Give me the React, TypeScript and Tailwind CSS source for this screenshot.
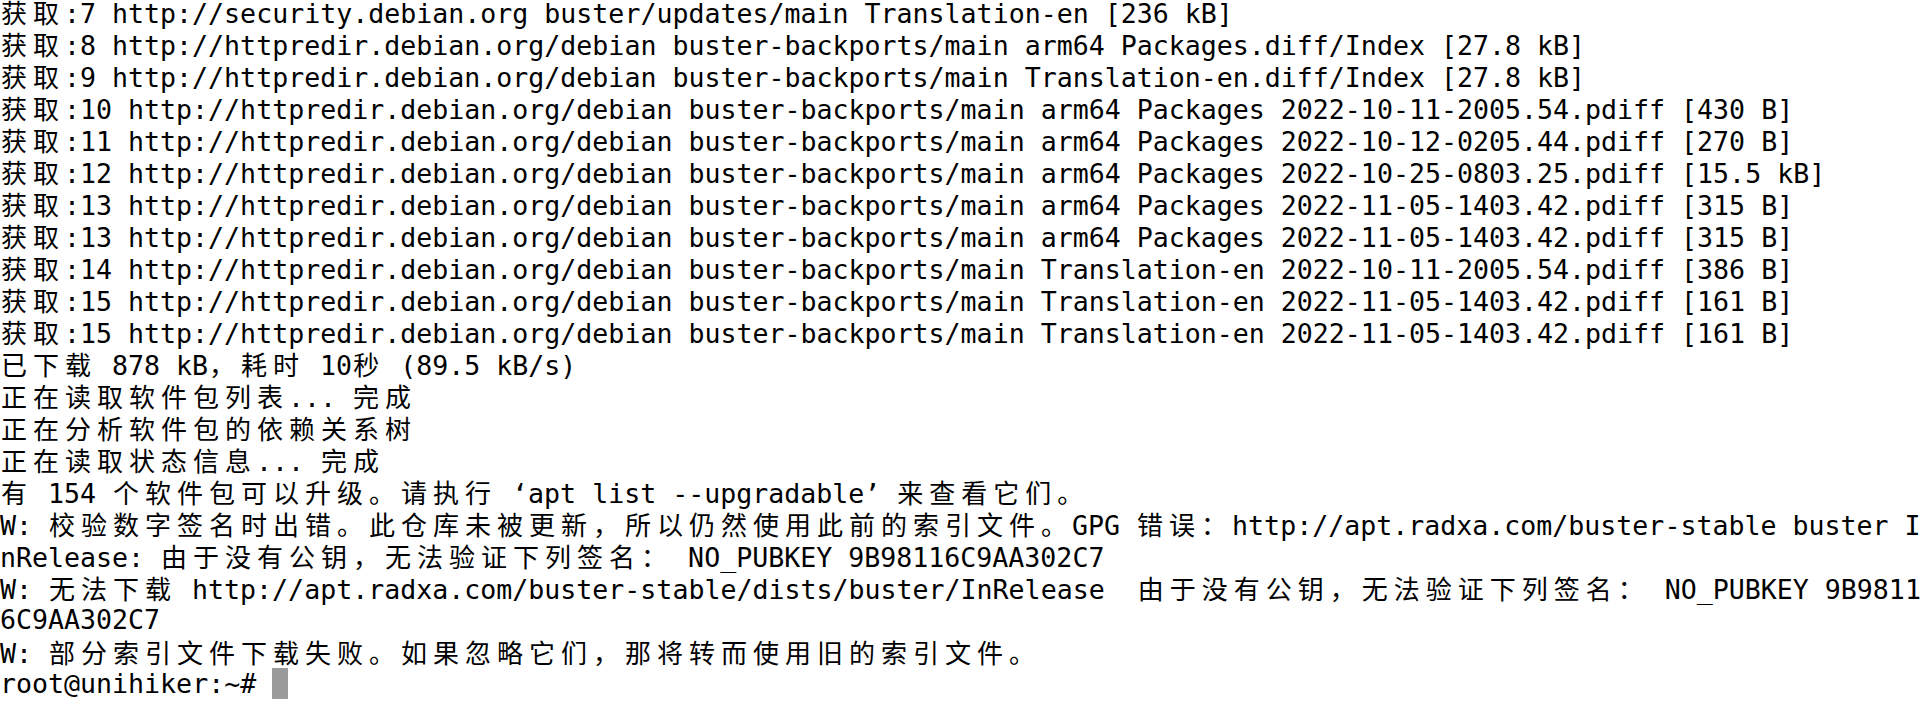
import React from "react";

const LINES: string[] = [
  "获取:7 http://security.debian.org buster/updates/main Translation-en [236 kB]",
  "获取:8 http://httpredir.debian.org/debian buster-backports/main arm64 Packages.diff/Index [27.8 kB]",
  "获取:9 http://httpredir.debian.org/debian buster-backports/main Translation-en.diff/Index [27.8 kB]",
  "获取:10 http://httpredir.debian.org/debian buster-backports/main arm64 Packages 2022-10-11-2005.54.pdiff [430 B]",
  "获取:11 http://httpredir.debian.org/debian buster-backports/main arm64 Packages 2022-10-12-0205.44.pdiff [270 B]",
  "获取:12 http://httpredir.debian.org/debian buster-backports/main arm64 Packages 2022-10-25-0803.25.pdiff [15.5 kB]",
  "获取:13 http://httpredir.debian.org/debian buster-backports/main arm64 Packages 2022-11-05-1403.42.pdiff [315 B]",
  "获取:13 http://httpredir.debian.org/debian buster-backports/main arm64 Packages 2022-11-05-1403.42.pdiff [315 B]",
  "获取:14 http://httpredir.debian.org/debian buster-backports/main Translation-en 2022-10-11-2005.54.pdiff [386 B]",
  "获取:15 http://httpredir.debian.org/debian buster-backports/main Translation-en 2022-11-05-1403.42.pdiff [161 B]",
  "获取:15 http://httpredir.debian.org/debian buster-backports/main Translation-en 2022-11-05-1403.42.pdiff [161 B]",
  "已下载 878 kB，耗时 10秒 (89.5 kB/s)",
  "正在读取软件包列表... 完成",
  "正在分析软件包的依赖关系树",
  "正在读取状态信息... 完成",
  "有 154 个软件包可以升级。请执行 ‘apt list --upgradable’ 来查看它们。",
  "W: 校验数字签名时出错。此仓库未被更新，所以仍然使用此前的索引文件。GPG 错误：http://apt.radxa.com/buster-stable buster I",
  "nRelease: 由于没有公钥，无法验证下列签名： NO_PUBKEY 9B98116C9AA302C7",
  "W: 无法下载 http://apt.radxa.com/buster-stable/dists/buster/InRelease  由于没有公钥，无法验证下列签名： NO_PUBKEY 9B9811",
  "6C9AA302C7",
  "W: 部分索引文件下载失败。如果忽略它们，那将转而使用旧的索引文件。",
];

function isWide(ch: string): boolean {
  const c = ch.codePointAt(0) || 0;
  return (
    (c >= 0x2e80 && c <= 0x9fff) ||
    (c >= 0xac00 && c <= 0xd7af) ||
    (c >= 0xf900 && c <= 0xfaff) ||
    (c >= 0xfe30 && c <= 0xfe4f) ||
    (c >= 0xff00 && c <= 0xff60) ||
    (c >= 0xffe0 && c <= 0xffe6)
  );
}

function Line({ text }: { text: string }) {
  const parts: React.ReactNode[] = [];
  let run = "";
  let k = 0;
  for (const ch of Array.from(text)) {
    if (isWide(ch)) {
      if (run) {
        parts.push(<span key={k++}>{run}</span>);
        run = "";
      }
      parts.push(
        <span
          key={k++}
          className="inline-block w-[32px] pl-[1px] font-['Noto_Sans_CJK_SC',sans-serif] text-[26px]"
        >
          {ch}
        </span>
      );
    } else {
      run += ch;
    }
  }
  if (run) parts.push(<span key={k++}>{run}</span>);
  return <div className="h-[32px] leading-[32px] whitespace-pre">{parts}</div>;
}

export default function App() {
  return (
    <div className="w-[1920px] h-[706px] bg-white overflow-hidden">
      <div className="-mt-[4px] text-black text-[26.6px] font-['DejaVu_Sans_Mono',monospace]">
        {LINES.map((l, i) => (
          <Line key={i} text={l} />
        ))}
        <div className="h-[32px] leading-[32px] whitespace-pre">
          <span>root@unihiker:~# </span>
          <span className="inline-block w-[16px] h-[31px] align-top bg-[#9a9a9a]" />
        </div>
      </div>
    </div>
  );
}
